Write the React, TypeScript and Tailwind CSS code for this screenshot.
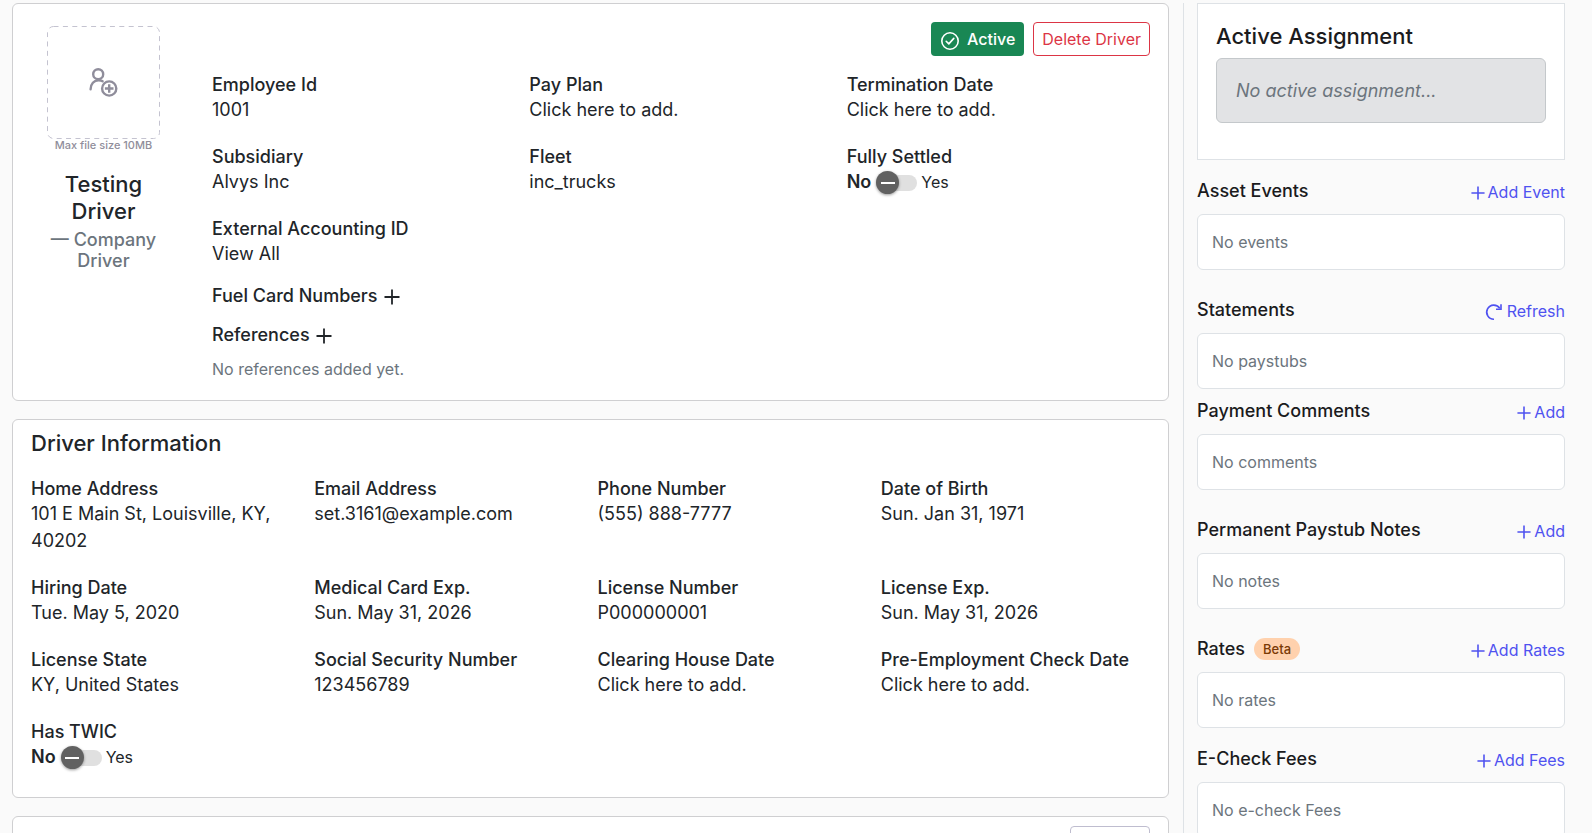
import type { ReactNode } from 'react'

type Field = {
  label: string
  value: string
  editable?: boolean
}

const SUMMARY: Field[] = [
  { label: 'Employee Id', value: '1001' },
  { label: 'Pay Plan', value: 'Click here to add.', editable: true },
  { label: 'Termination Date', value: 'Click here to add.', editable: true },
  { label: 'Subsidiary', value: 'Alvys Inc' },
  { label: 'Fleet', value: 'inc_trucks' },
]

const DRIVER_INFO: Field[] = [
  { label: 'Home Address', value: '101 E Main St, Louisville, KY, 40202' },
  { label: 'Email Address', value: 'set.3161@example.com' },
  { label: 'Phone Number', value: '(555) 888-7777' },
  { label: 'Date of Birth', value: 'Sun. Jan 31, 1971' },
  { label: 'Hiring Date', value: 'Tue. May 5, 2020' },
  { label: 'Medical Card Exp.', value: 'Sun. May 31, 2026' },
  { label: 'License Number', value: 'P000000001' },
  { label: 'License Exp.', value: 'Sun. May 31, 2026' },
  { label: 'License State', value: 'KY, United States' },
  { label: 'Social Security Number', value: '123456789' },
  { label: 'Clearing House Date', value: 'Click here to add.', editable: true },
  { label: 'Pre-Employment Check Date', value: 'Click here to add.', editable: true },
]

export default function App() {
  return (
    <div className="flex h-screen overflow-hidden bg-[#fafafa] pt-[3px] pr-[27px] pl-3 font-['Inter',sans-serif] text-lg leading-[27px] text-[#212529]">
      <main className="min-w-0 flex-1">
        <DriverSummary />
        <DriverInformation />
        <section className="mt-[18px] flex h-40 justify-end rounded-md border border-[#cfcfd1] bg-white px-[18px] pt-[9px]">
          <button type="button" aria-label="Edit" className="h-[34px] w-20 rounded border border-[#bfbdcf]" />
        </section>
      </main>
      <Sidebar />
    </div>
  )
}

function DriverSummary() {
  return (
    <section className="flex rounded-md border border-[#cfcfd1] bg-white px-[18px] pt-[18px] pb-[19px]">
      <div className="flex w-[145px] shrink-0 flex-col items-center px-3 pt-1 text-center">
        <button
          type="button"
          aria-label="Upload photo"
          className="flex size-[113px] shrink-0 items-center justify-center"
        >
          <PhotoFrame />
        </button>
        <small className="text-[11px] leading-3 font-medium whitespace-nowrap text-[#908e9b]">Max file size 10MB</small>
        <h1 className="mt-5 text-[22px] leading-[27px] font-medium">Testing Driver</h1>
        <h2 className="mt-1 leading-[21px] font-medium text-[#6c757d]">— Company Driver</h2>
      </div>
      <div className="ml-9 min-w-0 flex-1">
        <div className="flex justify-end gap-[9px]">
          <button
            type="button"
            className="flex h-[34px] items-center gap-[7px] rounded bg-[#198754] px-[9px] text-base font-medium text-white"
          >
            <CheckCircle />
            Active
          </button>
          <button
            type="button"
            className="h-[34px] rounded border border-[#dc3545] px-2 text-base text-[#dc3545]"
          >
            Delete Driver
          </button>
        </div>
        <div className="mt-[18px] grid grid-cols-3 gap-x-[14px] gap-y-[23px]">
          {SUMMARY.map((field) => (
            <FieldItem key={field.label} field={field} />
          ))}
          <ToggleField id="fully-settled" label="Fully Settled" />
          <FieldItem field={{ label: 'External Accounting ID', value: 'View All', editable: true }} />
        </div>
        <div className="mt-[15px] flex items-center gap-[6px]">
          <h3 className="font-medium">Fuel Card Numbers</h3>
          <button type="button" aria-label="Add fuel card number" className="pt-[2px]">
            <Plus className="size-4" />
          </button>
        </div>
        <div className="mt-3 flex items-center gap-[6px]">
          <h3 className="font-medium">References</h3>
          <button type="button" aria-label="Add reference" className="pt-[2px]">
            <Plus className="size-4" />
          </button>
        </div>
        <p className="mt-[9px] text-base leading-6 text-[#6c757d]">No references added yet.</p>
      </div>
    </section>
  )
}

function DriverInformation() {
  return (
    <section className="mt-[18px] rounded-md border border-[#cfcfd1] bg-white px-[18px] pt-[10px] pb-[27px]">
      <h2 className="text-[22px] leading-[26px] font-medium">Driver Information</h2>
      <div className="mt-[22px] grid grid-cols-4 gap-x-[14px] gap-y-[23px]">
        {DRIVER_INFO.map((field) => (
          <FieldItem key={field.label} field={field} />
        ))}
        <ToggleField id="has-twic" label="Has TWIC" />
      </div>
    </section>
  )
}

function FieldItem({ field }: { field: Field }) {
  return (
    <div className="min-w-0">
      <h3 className="leading-[22px] font-medium">{field.label}</h3>
      {field.editable ? (
        <button type="button" className="block cursor-pointer text-left">
          {field.value}
        </button>
      ) : (
        <p>{field.value}</p>
      )}
    </div>
  )
}

function ToggleField({ id, label }: { id: string; label: string }) {
  return (
    <div>
      <label htmlFor={id} className="block leading-[22px] font-medium">
        {label}
      </label>
      <div className="flex items-center">
        <span className="font-semibold">No</span>
        <span className="relative mt-[2px] mr-1 ml-[5px] flex h-[23px] w-[41px] items-center">
          <input id={id} type="checkbox" role="switch" className="h-4 w-full appearance-none rounded-full bg-[#e0e0e0]" />
          <span className="pointer-events-none absolute top-0 left-0 flex size-[23px] items-center justify-center rounded-full bg-[#616161] shadow-[0_1px_3px_rgba(0,0,0,0.4)]">
            <span className="h-[2px] w-[14px] bg-white" />
          </span>
        </span>
        <span className="text-base">Yes</span>
      </div>
    </div>
  )
}

function Sidebar() {
  return (
    <aside className="ml-[14px] w-[382px] shrink-0 border-l border-[#dee2e6] pl-[13px] text-[#1b1b1d]">
      <section className="border border-[#dee2e6] bg-white px-[18px] pt-[18px] pb-9">
        <h2 className="text-[22px] leading-7 font-medium">Active Assignment</h2>
        <p className="mt-2 rounded-md border border-[#c4c8cb] bg-[#e2e3e5] px-[19px] py-[18px] text-[#6c757d] italic">
          No active assignment...
        </p>
      </section>
      <SidePanel className="mt-[17px]" title="Asset Events" action="Add Event" empty="No events" />
      <SidePanel
        className="mt-[26px]"
        title="Statements"
        action="Refresh"
        icon={<Refresh />}
        empty="No paystubs"
      />
      <SidePanel className="mt-2" title="Payment Comments" action="Add" empty="No comments" />
      <SidePanel className="mt-[26px]" title="Permanent Paystub Notes" action="Add" empty="No notes" />
      <SidePanel
        className="mt-[26px]"
        title="Rates"
        badge={
          <span className="rounded-full bg-[#ffd1ad] px-[9px] text-[13px] leading-[22px] font-medium text-[#7a3a06]">
            Beta
          </span>
        }
        action="Add Rates"
        empty="No rates"
      />
      <SidePanel className="mt-[17px]" title="E-Check Fees" action="Add Fees" empty="No e-check Fees" />
    </aside>
  )
}

type SidePanelProps = {
  title: string
  action: string
  empty: string
  className: string
  badge?: ReactNode
  icon?: ReactNode
}

function SidePanel({ title, action, empty, className, badge, icon }: SidePanelProps) {
  return (
    <section className={className}>
      <div className="flex items-start justify-between">
        <div className="flex items-center gap-[9px]">
          <h3 className="font-medium">{title}</h3>
          {badge}
        </div>
        <button type="button" className="flex items-center gap-[3px] pt-1 text-base leading-[23px] text-[#4f52f0]">
          {icon ?? <Plus className="size-[14px]" />}
          {action}
        </button>
      </div>
      <div className="mt-[10px] rounded-md border border-[#dee2e6] bg-white px-[14px] py-[15px] text-base leading-6 text-[#6c757d]">
        {empty}
      </div>
    </section>
  )
}

function Plus({ className }: { className: string }) {
  return (
    <svg viewBox="0 0 16 16" fill="none" stroke="currentColor" strokeWidth="1.8" className={className}>
      <path d="M8 0.5v15M0.5 8h15" />
    </svg>
  )
}

function CheckCircle() {
  return (
    <svg viewBox="0 0 20 20" fill="none" stroke="currentColor" strokeWidth="1.6" className="mt-1 size-5">
      <circle cx="10" cy="10" r="8.2" />
      <path d="M6.2 10.3l2.6 2.6L13.8 7.4" strokeLinecap="round" strokeLinejoin="round" />
    </svg>
  )
}

function Refresh() {
  return (
    <svg viewBox="0 0 20 20" fill="none" stroke="currentColor" strokeWidth="1.6" className="size-5">
      <path d="M10 17.3A7.1 7.1 0 1 1 15.8 6.4" />
      <path d="M17 2.3V7.2H12" />
    </svg>
  )
}

/** Dashed drop zone with the add-person drawing in its middle. */
function PhotoFrame() {
  return (
    <svg viewBox="0 0 113 113" fill="none" stroke="#8f8d9b" strokeWidth="2.4" className="size-full">
      <rect x="0.5" y="0.5" width="112" height="112" rx="6" stroke="#c4c3d0" strokeWidth="1" strokeDasharray="5 4.4" />
      <circle cx="51.2" cy="48.2" r="5" />
      <path d="M43.6 63.2c0-5 3.4-9 8-9 1.8 0 3 .4 4 1.1" strokeLinecap="round" />
      <circle cx="62.2" cy="62.5" r="7.1" />
      <path d="M62.2 58.2v8.6M57.9 62.5h8.6" />
    </svg>
  )
}
